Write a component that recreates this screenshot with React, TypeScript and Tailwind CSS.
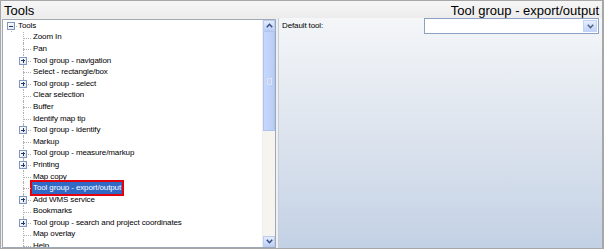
import type { ReactNode } from 'react';

type Node = { label: string; group?: boolean; selected?: boolean };

const ITEMS: Node[] = [
  { label: 'Zoom In' },
  { label: 'Pan' },
  { label: 'Tool group - navigation', group: true },
  { label: 'Select - rectangle/box' },
  { label: 'Tool group - select', group: true },
  { label: 'Clear selection' },
  { label: 'Buffer' },
  { label: 'Identify map tip' },
  { label: 'Tool group - identify', group: true },
  { label: 'Markup' },
  { label: 'Tool group - measure/markup', group: true },
  { label: 'Printing', group: true },
  { label: 'Map copy' },
  { label: 'Tool group - export/output', selected: true },
  { label: 'Add WMS service', group: true },
  { label: 'Bookmarks' },
  { label: 'Tool group - search and project coordinates', group: true },
  { label: 'Map overlay' },
  { label: 'Help' },
];

function ExpandBox({ open }: { open?: boolean }) {
  return (
    <span className="absolute left-[4px] top-[2px] w-[8px] h-[8px] border border-[#7f97bd] bg-gradient-to-br from-white to-[#dfe4ec] flex items-center justify-center">
      <span className="relative w-[4px] h-[4px]">
        <span className="absolute left-0 top-[1.5px] w-[4px] h-[1px] bg-[#1f3a6b]" />
        {!open && <span className="absolute top-0 left-[1.5px] h-[4px] w-[1px] bg-[#1f3a6b]" />}
      </span>
    </span>
  );
}

function Row({ node }: { node: Node }) {
  return (
    <div className="flex h-[11.6px] items-center">
      <span className="relative w-[16px] h-full ml-[12px] shrink-0">
        <span className="absolute left-[8px] top-0 h-full border-l border-dotted border-[#b0b0b0]" />
        <span className="absolute left-[8px] top-[6px] w-[8px] border-t border-dotted border-[#b0b0b0]" />
        {node.group && <ExpandBox />}
      </span>
      <span
        className={
          node.selected
            ? 'ml-[1px] px-[1px] h-[12px] leading-[12px] bg-[#316ac5] text-white outline-2 outline-[#e4000f]'
            : 'ml-[1px] px-[1px] leading-[12px]'
        }
      >
        {node.label}
      </span>
    </div>
  );
}

function ScrollButton({ children }: { children: ReactNode }) {
  return (
    <div className="h-[11px] border border-[#b9cdf3] bg-gradient-to-b from-[#e3ecfd] to-[#bcd0f7] flex items-center justify-center text-[#3b4f84]">
      {children}
    </div>
  );
}

function Chevron({ up }: { up?: boolean }) {
  return (
    <svg width="7" height="5" viewBox="0 0 7 5">
      <path d={up ? 'M0.8 4.2 L3.5 1.3 L6.2 4.2' : 'M0.8 0.8 L3.5 3.7 L6.2 0.8'} fill="none" stroke="currentColor" strokeWidth="1.6" />
    </svg>
  );
}

export default function App() {
  return (
    <div className="w-[604px] h-[249px] overflow-hidden flex flex-col bg-[#f0f0f0] border-t border-l border-r-2 border-b border-[#a7a7a7] font-['Liberation_Sans',Arial,sans-serif] text-black">
      <div className="h-[17px] flex items-end justify-between px-[3px] text-[13px] leading-[15px] bg-gradient-to-b from-[#f6f6f6] to-[#ececec]">
        <span>Tools</span>
        <span>Tool group - export/output</span>
      </div>
      <div className="flex flex-1 min-h-0">
        <div className="w-[274px] ml-[1px] mt-[1px] border border-[#9fa8b5] bg-white flex">
          <div className="flex-1 overflow-hidden text-[8px] tracking-[-0.12px]">
            <div className="flex h-[11.6px] items-center">
              <span className="relative w-[16px] h-full shrink-0">
                <span className="absolute left-[8px] top-[6px] h-[6px] border-l border-dotted border-[#b0b0b0]" />
                <span className="absolute left-[8px] top-[6px] w-[6px] border-t border-dotted border-[#b0b0b0]" />
                <ExpandBox open />
              </span>
              <span className="ml-[-1px] leading-[12px]">Tools</span>
            </div>
            {ITEMS.map((n) => (
              <Row key={n.label} node={n} />
            ))}
          </div>
          <div className="w-[13px] flex flex-col bg-[#f5f4ee] border-l border-[#eeeeee]">
            <ScrollButton>
              <Chevron up />
            </ScrollButton>
            <div className="h-[100px] border border-[#aec3ef] bg-gradient-to-r from-[#c7d8fb] to-[#b8cdf6] flex items-center justify-center">
              <div className="w-[5px] h-[7px] border border-[#d9e4fb] bg-[#c2d3f7]" />
            </div>
            <div className="flex-1" />
            <ScrollButton>
              <Chevron />
            </ScrollButton>
          </div>
        </div>
        <div className="flex-1 ml-[2px] border-l border-[#c5cfdc] bg-gradient-to-b from-[#f4f6f8] via-[#dde4ee] to-[#c3d1e5] flex items-start">
          <span className="ml-[3px] mt-[3px] text-[8px] tracking-[-0.12px] leading-[10px]">Default tool:</span>
          <div className="ml-auto mr-[3px] w-[175px] h-[16px] border border-[#8ba2c4] bg-white flex justify-end">
            <div className="w-[14px] m-[1px] border border-[#c3d3f5] bg-gradient-to-b from-[#e6eefd] to-[#c3d4f7] flex items-center justify-center text-[#4d6185]">
              <Chevron />
            </div>
          </div>
        </div>
      </div>
    </div>
  );
}
